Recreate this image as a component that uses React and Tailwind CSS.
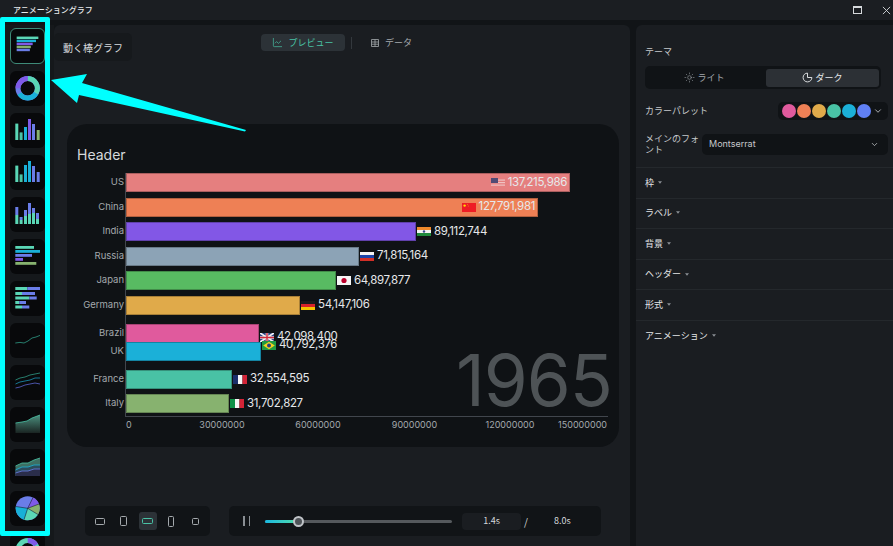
import React from 'react';
import { ChartLine, ChevronDown, Sun } from 'lucide-react';

// flags, 14x9
const Flag = ({ code, className = '' }) => {
  const flags = {
    us: (
      <>
        <rect width="14" height="9" fill="#e57f7f" />
        <rect y="1.5" width="14" height="1.2" fill="#f3d3d3" />
        <rect y="4" width="14" height="1.2" fill="#f3d3d3" />
        <rect y="6.5" width="14" height="1.2" fill="#f3d3d3" />
        <rect width="7" height="5" fill="#2b3f73" />
      </>
    ),
    cn: (
      <>
        <rect width="14" height="9" fill="#ee1c25" />
        <circle cx="2.6" cy="2.6" r="1.2" fill="#ffde00" />
        <circle cx="5.4" cy="1.4" r="0.4" fill="#ffde00" />
        <circle cx="6.2" cy="3" r="0.4" fill="#ffde00" />
      </>
    ),
    in: (
      <>
        <rect width="14" height="3" fill="#f08a2c" />
        <rect y="3" width="14" height="3" fill="#f4f4f4" />
        <rect y="6" width="14" height="3" fill="#1f8a3c" />
        <circle cx="7" cy="4.5" r="1.2" fill="#3a4a90" />
      </>
    ),
    ru: (
      <>
        <rect width="14" height="3" fill="#f4f4f4" />
        <rect y="3" width="14" height="3" fill="#1c44a8" />
        <rect y="6" width="14" height="3" fill="#d22f27" />
      </>
    ),
    jp: (
      <>
        <rect width="14" height="9" fill="#f6f6f6" />
        <circle cx="7" cy="4.5" r="2.6" fill="#bc002d" />
      </>
    ),
    de: (
      <>
        <rect width="14" height="3" fill="#1c1c1c" />
        <rect y="3" width="14" height="3" fill="#d8232a" />
        <rect y="6" width="14" height="3" fill="#f5c400" />
      </>
    ),
    gb: (
      <>
        <rect width="14" height="9" fill="#2b3f80" />
        <path d="M0 0L14 9M14 0L0 9" stroke="#f2f2f2" strokeWidth="1.8" />
        <path d="M7 0V9M0 4.5H14" stroke="#f2f2f2" strokeWidth="2.6" />
        <path d="M7 0V9M0 4.5H14" stroke="#d0283a" strokeWidth="1.4" />
      </>
    ),
    br: (
      <>
        <rect width="14" height="9" fill="#1f9a43" />
        <path d="M7 0.8L12.8 4.5L7 8.2L1.2 4.5Z" fill="#f4d21f" />
        <circle cx="7" cy="4.5" r="2" fill="#2b3f80" />
      </>
    ),
    fr: (
      <>
        <rect width="5" height="9" fill="#1a2f6b" />
        <rect x="5" width="4.5" height="9" fill="#f6f6f6" />
        <rect x="9.5" width="4.5" height="9" fill="#d32437" />
      </>
    ),
    it: (
      <>
        <rect width="5" height="9" fill="#0f9148" />
        <rect x="5" width="4.5" height="9" fill="#f6f6f6" />
        <rect x="9.5" width="4.5" height="9" fill="#d32437" />
      </>
    ),
  };
  return (
    <svg viewBox="0 0 14 9" preserveAspectRatio="none" className={`h-[9px] w-[14px] shrink-0 ${className}`}>
      {flags[code]}
    </svg>
  );
};

const rows = [
  { name: 'US', code: 'us', value: '137,215,986', bar: 'w-[444px] bg-[#e57f7f]', row: 'mt-[3px]', inside: true, flagClass: 'opacity-80' },
  { name: 'China', code: 'cn', value: '127,791,981', bar: 'w-[412px] bg-[#ee8055]', row: 'mt-[5.5px]', inside: true },
  { name: 'India', code: 'in', value: '89,112,744', bar: 'w-[290px] bg-[#8257e6]', row: 'mt-[5.5px]' },
  { name: 'Russia', code: 'ru', value: '71,815,164', bar: 'w-[233px] bg-[#8ca3b6]', row: 'mt-[5.5px]' },
  { name: 'Japan', code: 'jp', value: '64,897,877', bar: 'w-[210px] bg-[#58bb62]', row: 'mt-[5.5px]' },
  { name: 'Germany', code: 'de', value: '54,147,106', bar: 'w-[174px] bg-[#e0aa4a]', row: 'mt-[5.5px]' },
  { name: 'Brazil', code: 'gb', value: '42,098,400', bar: 'w-[133px] bg-[#e05a9d]', row: 'mt-[9px]', shift: 'translate-y-[4px]' },
  { name: 'UK', code: 'br', value: '40,792,376', bar: 'w-[135px] bg-[#1bb0d8]', row: 'mt-[-1px]', shift: '-translate-y-[6px]' },
  { name: 'France', code: 'fr', value: '32,554,595', bar: 'w-[106px] bg-[#49c2a5]', row: 'mt-[9px]' },
  { name: 'Italy', code: 'it', value: '31,702,827', bar: 'w-[103px] bg-[#87b26f]', row: 'mt-[5.5px]' },
];

const ValueLabel = ({ code, value, flagClass }) => (
  <div className="flex items-center gap-[3px] text-[11.5px] tracking-[-0.35px] text-[#e6e8ea] whitespace-nowrap">
    <Flag code={code} className={flagClass} />
    <span>{value}</span>
  </div>
);

const BarRow = ({ name, code, value, bar, row, inside, shift, flagClass }) => (
  <div className={`-ml-[48px] flex h-[19px] items-center ${row}`}>
    <div className="w-[48px] shrink-0 pr-[2px] text-right text-[9.5px] text-[#a4a9ad]">{name}</div>
    <div className={`flex h-[19px] shrink-0 items-center justify-end border border-black/25 pr-[2px] ${bar}`}>
      {inside && <ValueLabel code={code} value={value} flagClass={flagClass} />}
    </div>
    {!inside && (
      <div className={`z-10 ml-[1px] ${shift || ''}`}>
        <ValueLabel code={code} value={value} />
      </div>
    )}
  </div>
);

const hBars = (list) =>
  list.map((b, i) => <rect key={i} x={b[0]} y={b[1]} width={b[2]} height={b[3]} fill={b[4]} />);

// chart thumbnails in the left strip
const thumbs = [
  <>
    {hBars([
      [6, 7.5, 23, 2.6, '#5ad6b5'],
      [6, 10.8, 20.5, 2.6, '#19b0d8'],
      [6, 14, 17, 2.6, '#7f5ae8'],
      [6, 17.2, 15, 2.6, '#85b06c'],
      [6, 20.4, 14, 2.6, '#6a7de8'],
    ])}
  </>,
  <>
    <circle cx="17.7" cy="17.3" r="9.7" fill="none" stroke="#6a7de8" strokeWidth="5" />
    <path d="M17.7 7.6A9.7 9.7 0 0 1 26 22.3" fill="none" stroke="#5ad6b5" strokeWidth="5" />
    <path d="M26 22.3A9.7 9.7 0 0 1 9.5 22.5" fill="none" stroke="#19b0d8" strokeWidth="5" />
    <path d="M8 17.3A9.7 9.7 0 0 1 17.7 7.6" fill="none" stroke="#7f5ae8" strokeWidth="5" />
  </>,
  <>
    {hBars([
      [5.3, 10.6, 3, 16.4, '#5ad6b5'],
      [9.6, 19.4, 3, 7.6, '#49c2a5'],
      [14, 14, 3, 13, '#19b0d8'],
      [18, 6, 3, 21, '#7f5ae8'],
      [22, 11, 3, 16, '#6a7de8'],
      [26.7, 17, 3, 10, '#87b26f'],
    ])}
  </>,
  <>
    {hBars([
      [5.3, 10.6, 3, 16.4, '#5ad6b5'],
      [9.6, 19.4, 3, 7.6, '#49c2a5'],
      [14, 10, 3, 17, '#19b0d8'],
      [18, 6, 3, 21, '#19b0d8'],
      [22, 11, 3, 16, '#6a7de8'],
      [26.7, 17, 3, 10, '#6a7de8'],
    ])}
  </>,
  <>
    {hBars([
      [5.3, 10, 3, 8, '#6a7de8'],
      [5.3, 18, 3, 9, '#5ad6b5'],
      [9.6, 20, 3, 3, '#6a7de8'],
      [9.6, 23, 3, 4, '#5ad6b5'],
      [14, 13, 3, 6, '#6a7de8'],
      [14, 19, 3, 8, '#5ad6b5'],
      [18, 6, 3, 11, '#6a7de8'],
      [18, 17, 3, 10, '#5ad6b5'],
      [22, 11, 3, 5, '#6a7de8'],
      [22, 16, 3, 11, '#5ad6b5'],
      [26, 16, 3, 6, '#6a7de8'],
      [26, 22, 3, 5, '#5ad6b5'],
    ])}
  </>,
  <>
    {hBars([
      [5.3, 7, 18.7, 2.8, '#5ad6b5'],
      [5.3, 11, 24.7, 2.8, '#19b0d8'],
      [5.3, 15, 16.7, 2.8, '#6a7de8'],
      [5.3, 19, 7.7, 2.8, '#7f5ae8'],
      [5.3, 23, 21, 2.8, '#87b26f'],
    ])}
  </>,
  <>
    {hBars([
      [5.3, 6, 12, 3, '#5ad6b5'],
      [17.3, 6, 12.7, 3, '#6a7de8'],
      [5.3, 11, 6.7, 3, '#5ad6b5'],
      [12, 11, 13, 3, '#6a7de8'],
      [5.3, 15.5, 14, 3, '#5ad6b5'],
      [19.3, 15.5, 7.4, 3, '#6a7de8'],
      [5.3, 20, 4, 3, '#5ad6b5'],
      [9.3, 20, 6.7, 3, '#6a7de8'],
      [5.3, 24.5, 6.7, 3, '#5ad6b5'],
      [12, 24.5, 7.3, 3, '#6a7de8'],
    ])}
  </>,
  <path d="M5.3 20L10 19.4L14 20L18 18L22 15L26 14L30 12.4" fill="none" stroke="#2f9a85" strokeWidth="0.8" />,
  <>
    <path d="M5.5 15L10 13L15 12L20 10L25 9L30 8" fill="none" stroke="#2f9a85" strokeWidth="0.8" />
    <path d="M5.5 19L10 17L15 16L20 15L25 13L30 13" fill="none" stroke="#1a93b5" strokeWidth="0.8" />
    <path d="M5.5 23L10 22L15 20L20 19L25 18L30 19" fill="none" stroke="#5b66cf" strokeWidth="0.8" />
  </>,
  <>
    <defs>
      <linearGradient id="areaFade" x1="0" y1="0" x2="0" y2="1">
        <stop offset="0" stopColor="#4b8f7e" />
        <stop offset="1" stopColor="#1a2422" />
      </linearGradient>
    </defs>
    <path d="M5.5 16L12 15L17 14L22 11L30 8V26H5.5Z" fill="url(#areaFade)" />
    <path d="M5.5 16L12 15L17 14L22 11L30 8" fill="none" stroke="#49c2a5" strokeWidth="0.8" />
  </>,
  <>
    <path d="M5.5 17L12 14L18 14L24 11L30 9V27H5.5Z" fill="#3d6f63" />
    <path d="M5.5 21L12 18L18 18L24 16L30 16V27H5.5Z" fill="#2c4d5c" />
    <path d="M5.5 24L12 22L18 22L24 20L30 20V27H5.5Z" fill="#2a2d4a" />
    <path d="M5.5 17L12 14L18 14L24 11L30 9" fill="none" stroke="#49c2a5" strokeWidth="0.8" />
    <path d="M5.5 21L12 18L18 18L24 16L30 16" fill="none" stroke="#19b0d8" strokeWidth="0.8" />
    <path d="M5.5 24L12 22L18 22L24 20L30 20" fill="none" stroke="#6a7de8" strokeWidth="0.8" />
  </>,
  <>
    <circle cx="17.7" cy="17.3" r="12" fill="#6a7de8" />
    <path d="M17.7 17.3L23 6.5A12 12 0 0 1 29 13Z" fill="#7f5ae8" />
    <path d="M17.7 17.3L29 13A12 12 0 0 1 28 23.5Z" fill="#87b26f" />
    <path d="M17.7 17.3L28 23.5A12 12 0 0 1 14 28.7Z" fill="#5ad6b5" />
    <path d="M17.7 17.3L14 28.7A12 12 0 0 1 5.8 15.5Z" fill="#19b0d8" />
    <path d="M17.7 17.3L23 6.5M17.7 17.3L29 13M17.7 17.3L28 23.5M17.7 17.3L14 28.7M17.7 17.3L5.8 15.5" stroke="#0a0b0d" strokeWidth="0.5" />
  </>,
  <>
    <circle cx="17.7" cy="17.3" r="9.7" fill="none" stroke="#5ad6b5" strokeWidth="5" />
    <path d="M17.7 7.6A9.7 9.7 0 0 1 26 12" fill="none" stroke="#7f5ae8" strokeWidth="5" />
  </>,
];

const Thumb = ({ children, active }) => (
  <div
    className={`w-[35px] shrink-0 rounded-[6px] bg-[#08090b] ${
      active ? 'h-[36px] border border-[#3e8a78]' : 'h-[35px]'
    }`}
  >
    <svg viewBox="0 0 35 35" className="h-full w-full">
      {children}
    </svg>
  </div>
);

const sections = ['枠', 'ラベル', '背景', 'ヘッダー', '形式', 'アニメーション'];
const palette = ['bg-[#e05a9d]', 'bg-[#ee8055]', 'bg-[#e0aa4a]', 'bg-[#49c2a5]', 'bg-[#1bb0d8]', 'bg-[#6080f5]'];

const DeviceButton = ({ w, h, active }) => (
  <div className={`flex h-[18px] w-[18px] items-center justify-center rounded-[3px] ${active ? 'bg-[#2c3237]' : ''}`}>
    <div className={`rounded-[1.5px] border ${active ? 'border-[#49c2a5]' : 'border-[#a4a9ad]'} ${w} ${h}`} />
  </div>
);

export default function App() {
  return (
    <div className="relative flex h-[546px] w-[893px] flex-col overflow-hidden bg-[#111417] font-['Noto_Sans_CJK_JP',sans-serif] text-[#d6d9dc]">
      {/* title bar */}
      <div className="flex h-[20px] shrink-0 items-center bg-[#1b1e22] pl-[13px] pr-[2px]">
        <span className="text-[8px] font-medium text-[#e8eaec]">アニメーショングラフ</span>
        <div className="ml-auto flex items-center gap-[20px]">
          <div className="h-[8px] w-[9px] border border-[#d6d9dc] border-t-2" />
          <svg viewBox="0 0 10 10" className="h-[9px] w-[9px]">
            <path d="M1 1L9 9M9 1L1 9" stroke="#d6d9dc" strokeWidth="1" />
          </svg>
        </div>
      </div>

      <div className="flex min-h-0 flex-1 pt-[5px]">
        {/* chart type strip */}
        <div className="flex w-[54px] shrink-0 flex-col gap-[7px] overflow-hidden bg-[#15181b] pl-[10px] pt-[3px]">
          {thumbs.map((t, i) => (
            <Thumb key={i} active={i === 0}>
              {t}
            </Thumb>
          ))}
        </div>

        {/* preview */}
        <div className="flex w-[576px] shrink-0 flex-col rounded-t-[6px] bg-[#1a1d21]">
          <div className="mt-[9px] flex h-[17px] items-center pl-[207px] text-[9px]">
            <div className="flex h-[17px] w-[84px] items-center justify-center gap-[5px] rounded-[4px] bg-[#2c3237] text-[#49c2a5]">
              <ChartLine size={11} strokeWidth={1.5} />
              <span>プレビュー</span>
            </div>
            <div className="ml-[6px] h-[12px] w-px bg-[#33383d]" />
            <div className="ml-[19px] flex items-center gap-[6px] text-[#a4a9ad]">
              <svg viewBox="0 0 8 8" className="h-[8px] w-[8px]">
                <path d="M0.5 0.5H7.5V7.5H0.5ZM0.5 3H7.5M0.5 5.2H7.5M4 0.5V7.5" fill="none" stroke="#a4a9ad" strokeWidth="0.8" />
              </svg>
              <span>データ</span>
            </div>
          </div>

          {/* chart card */}
          <div className="ml-[13px] mt-[73px] h-[323px] w-[552px] rounded-[20px] bg-[#0f1215] pl-[10px] pt-[22px] font-['Inter',sans-serif]">
            <div className="h-[24px] text-[14px] leading-[18px] text-[#d6d9dc]">Header</div>
            <div className="relative ml-[48px] h-[244px] w-[483px] border-b border-l border-[#41464d]">
              {rows.map((r) => (
                <BarRow key={r.name} {...r} />
              ))}
              <div className="absolute bottom-[4px] right-[-4px] text-[71px] leading-[64px] tracking-[-1px] text-[#4e5356]">
                1965
              </div>
            </div>
            <div className="ml-[49px] mt-[1px] flex text-[9px] leading-[13px] text-[#a4a9ad]">
              <span className="w-[48px]">0</span>
              <span className="w-[96px] text-center">30000000</span>
              <span className="w-[96px] text-center">60000000</span>
              <span className="w-[97px] text-center">90000000</span>
              <span className="w-[94px] text-center">120000000</span>
              <span className="w-[50px] text-right whitespace-nowrap">150000000</span>
            </div>
          </div>

          {/* player controls */}
          <div className="ml-[31px] mt-[59px] flex h-[30px] gap-[19px]">
            <div className="flex w-[125px] items-center justify-between rounded-[5px] bg-[#111417] px-[6px]">
              <DeviceButton w="w-[10px]" h="h-[7px]" />
              <DeviceButton w="w-[7px]" h="h-[10px]" />
              <DeviceButton w="w-[11px]" h="h-[6px]" active />
              <DeviceButton w="w-[6px]" h="h-[11px]" />
              <DeviceButton w="w-[7px]" h="h-[7px]" />
            </div>
            <div className="flex w-[372px] items-center rounded-[5px] bg-[#111417] pl-[14px]">
              <div className="flex gap-[4px]">
                <div className="h-[10px] w-[1.5px] bg-[#8a8f94]" />
                <div className="h-[10px] w-[1.5px] bg-[#8a8f94]" />
              </div>
              <div className="relative ml-[15px] h-[3px] w-[187px] rounded-full bg-[#55595d]">
                <div className="h-full w-[33px] rounded-full bg-gradient-to-r from-[#19b8e0] to-[#50dca8]" />
                <div className="absolute left-[28px] top-[-4px] h-[11px] w-[11px] rounded-full border-2 border-[#c0c4c8] bg-[#4e5358]" />
              </div>
              <div className="ml-[10px] flex h-[17px] w-[59px] items-center justify-center rounded-[4px] bg-[#1a1d21] text-[9px] text-[#d6d9dc]">
                1.4s
              </div>
              <span className="ml-[3px] text-[10px] text-[#d6d9dc]">/</span>
              <span className="ml-[26px] text-[9px] text-[#d6d9dc]">8.0s</span>
            </div>
          </div>
        </div>

        {/* settings */}
        <div className="ml-[6px] flex flex-1 flex-col rounded-tl-[6px] bg-[#1a1d21] pt-[20px] text-[9px]">
          <div className="px-[9px]">
            <div className="h-[14px] leading-[14px] text-[#c6c9cc]">テーマ</div>
            <div className="mt-[7px] flex h-[23px] w-[236px] items-center rounded-[5px] bg-[#101316] pl-[2px] pr-[2px]">
              <div className="flex flex-1 items-center justify-center gap-[2px] pr-[4px] text-[#a4a9ad]">
                <Sun size={11} strokeWidth={1.2} />
                <span>ライト</span>
              </div>
              <div className="flex h-[18px] w-[113px] items-center justify-center gap-[2px] rounded-[3px] bg-[#2c3035] text-[#e8eaec]">
                <svg viewBox="0 0 12 12" className="h-[11px] w-[11px]">
                  <path d="M6 1.2A4.8 4.8 0 1 0 10.8 6H6Z" fill="none" stroke="#e8eaec" strokeWidth="1" />
                </svg>
                <span>ダーク</span>
              </div>
            </div>
            <div className="mt-[13px] flex h-[18px] items-center justify-between">
              <span className="text-[#c6c9cc]">カラーパレット</span>
              <div className="-mr-[4px] flex h-[18px] w-[110px] items-center gap-[1.5px] rounded-[5px] bg-[#101316] pl-[4px]">
                {palette.map((c) => (
                  <div key={c} className={`h-[13.5px] w-[13.5px] rounded-full ${c}`} />
                ))}
                <ChevronDown size={10} className="ml-[1px] text-[#c6c9cc]" />
              </div>
            </div>
            <div className="mt-[13px] flex h-[22px] items-center">
              <span className="w-[57px] shrink-0 leading-[11px] text-[#c6c9cc]">メインのフォント</span>
              <div className="-mr-[4px] flex h-[21px] flex-1 items-center justify-between rounded-[5px] bg-[#101316] pl-[7px] pr-[9px] font-['Inter',sans-serif] text-[#c6c9cc]">
                <span>Montserrat</span>
                <ChevronDown size={9} />
              </div>
            </div>
          </div>
          <div className="mt-[12px]">
            {sections.map((s) => (
              <div key={s} className="flex h-[30.6px] items-center gap-[4px] border-t border-[#24282c] pb-[1px] pl-[9px] text-[#e4e6e8]">
                <span>{s}</span>
                <svg viewBox="0 0 6 4" className="h-[3px] w-[4px]">
                  <path d="M0 0H6L3 4Z" fill="#8a8f94" />
                </svg>
              </div>
            ))}
          </div>
        </div>
      </div>

      {/* tooltip */}
      <div className="absolute left-[54px] top-[33px] flex h-[28px] w-[78px] items-center justify-center rounded-[5px] bg-[#16191c] text-[10px] text-[#d6d9dc]">
        動く棒グラフ
      </div>

      {/* cyan annotation */}
      <div className="pointer-events-none absolute left-0 top-[17px] h-[519px] w-[50px] rounded-[2px] border-[5px] border-[#00ffff]" />
      <svg viewBox="0 0 893 546" className="pointer-events-none absolute left-0 top-0 h-[546px] w-[893px]">
        <polygon points="51,80 87,74 82,83 246,130 245,131.5 79,95 77,103" fill="#00ffff" />
      </svg>
    </div>
  );
}
